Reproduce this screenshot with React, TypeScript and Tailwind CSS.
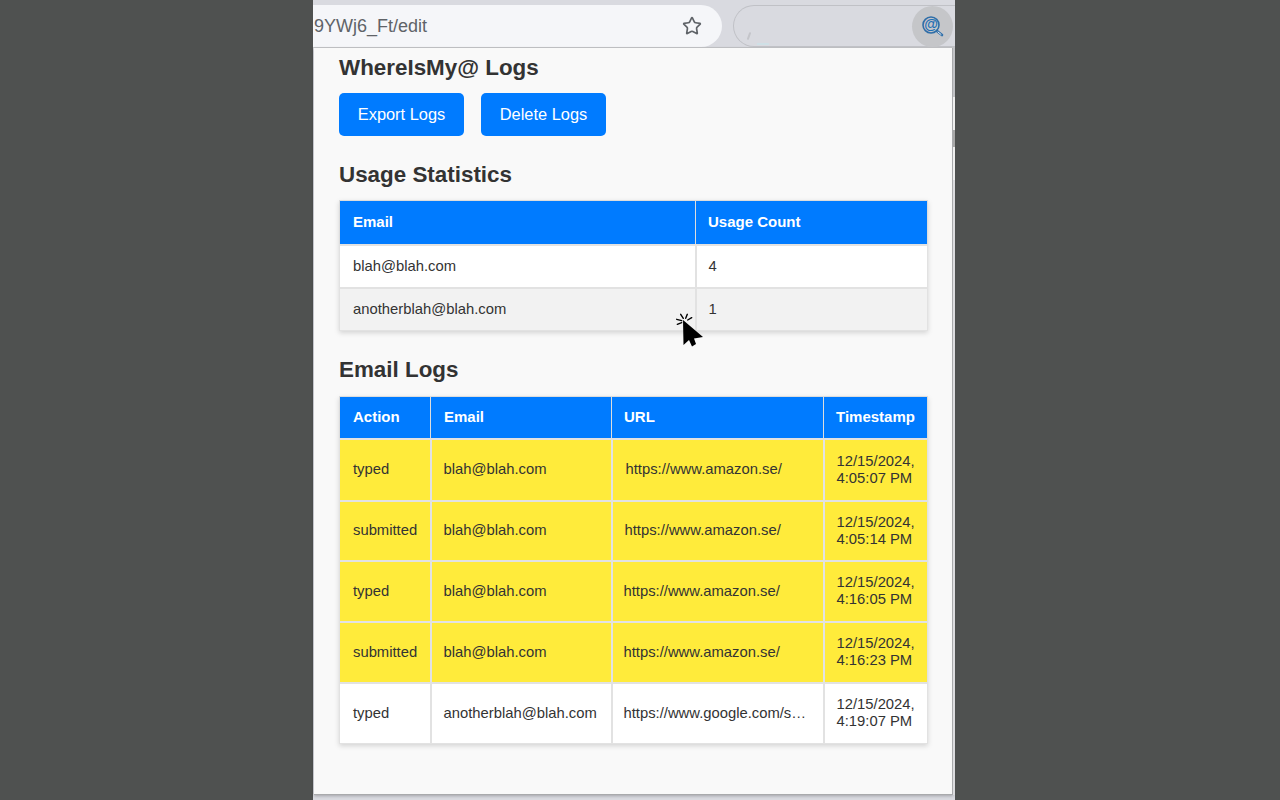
import { Star } from 'lucide-react';

const STATS = [
  { email: 'blah@blah.com', count: 4, cls: 'bg-white' },
  { email: 'anotherblah@blah.com', count: 1, cls: 'bg-[#f2f2f2]' },
];

const LOGS = [
  { action: 'typed', email: 'blah@blah.com', url: 'https://www.amazon.se/', date: '4:05:07 PM', cls: 'bg-[#ffeb3b]', h: 'h-[62px]', pad: 'pl-[13px]' },
  { action: 'submitted', email: 'blah@blah.com', url: 'https://www.amazon.se/', date: '4:05:14 PM', cls: 'bg-[#ffeb3b]', h: 'h-[60px]', pad: 'pl-[12px]' },
  { action: 'typed', email: 'blah@blah.com', url: 'https://www.amazon.se/', date: '4:16:05 PM', cls: 'bg-[#ffeb3b]', h: 'h-[61px]', pad: 'pl-[11px]' },
  { action: 'submitted', email: 'blah@blah.com', url: 'https://www.amazon.se/', date: '4:16:23 PM', cls: 'bg-[#ffeb3b]', h: 'h-[61px]', pad: 'pl-[11px]' },
  { action: 'typed', email: 'anotherblah@blah.com', url: 'https://www.google.com/search?q=blah', date: '4:19:07 PM', cls: 'bg-white', h: 'h-[61px]', pad: 'pl-[11px]' },
];

const th = 'border border-[#dddddd] bg-[#007bff] px-3 first:pl-[13px] text-left text-[15px] font-bold text-white';
const td = 'border-2 border-[#e2e2e2] first:border-l last:border-r [tr:last-child>&]:border-b px-3 first:pl-[13px] text-[14.8px] text-[#333333]';

export default function App() {
  return (
    <div className="relative flex h-[800px] w-[1280px] overflow-hidden bg-[#4f5150] pl-[313px] font-['Liberation_Sans',Arial,sans-serif]">
      <div className="flex h-full w-[642px] flex-col bg-[#d9dae0]">
        {/* browser toolbar */}
        <div className="flex h-[48px] shrink-0 items-start border-b border-[#c6c7ca] pt-[5px]">
          <div className="flex h-[42px] w-[409px] items-center justify-between rounded-r-[21px] bg-[#f5f6f9] pl-px pr-[20px]">
            <span className="text-[18px] text-[#5f6368]">9YWj6_Ft/edit</span>
            <Star size={20} strokeWidth={2} className="text-[#5f6368]" />
          </div>
          <div className="relative ml-[11px] flex h-[42px] flex-1 items-center justify-end rounded-l-[21px] border-y border-l border-[#c0c1c6] pr-[2px]">
            <div className="absolute left-[14px] top-[26px] h-[8px] w-[2px] rotate-[20deg] rounded-full bg-[#c4c5ca]" />
            <div className="absolute bottom-[1px] left-[23px] h-[2px] w-[12px] bg-[#cfe0e6]" />
            <div className="relative flex h-[41px] w-[41px] items-center justify-center rounded-full bg-[#c5c6c9]">
              <span className="mb-[5px] mr-[3px] text-[14px] font-bold leading-none text-[#1f6fb5]">@</span>
              <svg viewBox="0 0 24 24" className="absolute left-[9px] top-[9px] h-[24px] w-[24px]" fill="none">
                <circle cx="10" cy="10" r="8" stroke="#2f6ea8" strokeWidth="1.6" />
                <path d="M16 16l5 4" stroke="#2f6ea8" strokeWidth="2.6" strokeLinecap="round" />
                <path d="M17 17l3 2.4" stroke="#e8eef4" strokeWidth="1" strokeLinecap="round" />
              </svg>
            </div>
          </div>
        </div>

        {/* popup + sliver of the page behind it */}
        <div className="flex flex-1 pb-[5px] pl-px">
          <div className="h-full flex-1 border-b border-r border-[#a9aaac] bg-[#f9f9f9] pl-[25px] pr-[24px] shadow-[0_1px_3px_rgba(0,0,0,0.25)]">
            <h1 className="pt-[7px] text-[22.4px] font-bold leading-[26px] text-[#333333]">WhereIsMy@ Logs</h1>
            <div className="mt-[12px] flex gap-[17px]">
              <button className="h-[43px] w-[125px] rounded-[5px] bg-[#007bff] text-[16.4px] text-white">Export Logs</button>
              <button className="h-[43px] w-[125px] rounded-[5px] bg-[#007bff] text-[16.4px] text-white">Delete Logs</button>
            </div>

            <h2 className="mt-[26px] text-[22.4px] font-bold leading-[26px] text-[#333333]">Usage Statistics</h2>
            <table className="mt-[12px] w-[589px] table-fixed border-collapse shadow-[0_2px_5px_rgba(0,0,0,0.15)]">
              <colgroup>
                <col className="w-[356px]" />
                <col />
              </colgroup>
              <thead>
                <tr className="h-[44px]">
                  <th className={th}>Email</th>
                  <th className={th}>Usage Count</th>
                </tr>
              </thead>
              <tbody>
                {STATS.map(s => (
                  <tr key={s.email} className="h-[43px]">
                    <td className={`${td} ${s.cls}`}>{s.email}</td>
                    <td className={`${td} ${s.cls}`}>{s.count}</td>
                  </tr>
                ))}
              </tbody>
            </table>

            <h2 className="mt-[26px] text-[22.4px] font-bold leading-[26px] text-[#333333]">Email Logs</h2>
            <table className="mt-[13px] w-[589px] table-fixed border-collapse shadow-[0_2px_5px_rgba(0,0,0,0.15)]">
              <colgroup>
                <col className="w-[91px]" />
                <col className="w-[181px]" />
                <col className="w-[212px]" />
                <col />
              </colgroup>
              <thead>
                <tr className="h-[42px]">
                  <th className={th}>Action</th>
                  <th className={`${th} pl-[13px]`}>Email</th>
                  <th className={th}>URL</th>
                  <th className={th}>Timestamp</th>
                </tr>
              </thead>
              <tbody>
                {LOGS.map((l, i) => (
                  <tr key={i} className={l.h}>
                    <td className={`${td} ${l.cls}`}>{l.action}</td>
                    <td className={`${td} ${l.cls}`}>{l.email}</td>
                    <td className={`${td} ${l.cls} truncate ${l.pad}`}>{l.url}</td>
                    <td className={`${td} ${l.cls} leading-[17px]`}>12/15/2024,<br />{l.date}</td>
                  </tr>
                ))}
              </tbody>
            </table>
          </div>
          <div className="flex w-[2px] shrink-0 flex-col">
            <div className="h-[49px] bg-[#c2c3c6]" />
            <div className="h-[33px] bg-[#efefef]" />
            <div className="h-[17px] bg-[#a8a8a8]" />
            <div className="h-[33px] bg-[#efefef]" />
            <div className="flex-1 bg-[#dcdcdf]" />
          </div>
        </div>
      </div>

      {/* mouse pointer with click burst */}
      <svg viewBox="0 0 32 36" className="absolute left-[674px] top-[312px] h-[36px] w-[32px]">
        <path d="M9 8L9.5 33L15 28L18 34.5L22 32L20 26.5L29 25Z" fill="#000000" />
        <path d="M2.7 7.3L7.7 8.7M6.7 2.3L9.3 6.3M13.3 2.3L11.7 6.3M17.7 5.7L13.7 8M3.3 12.3L7.7 10.7" stroke="#000000" strokeWidth="1.4" strokeLinecap="round" />
      </svg>
    </div>
  );
}
